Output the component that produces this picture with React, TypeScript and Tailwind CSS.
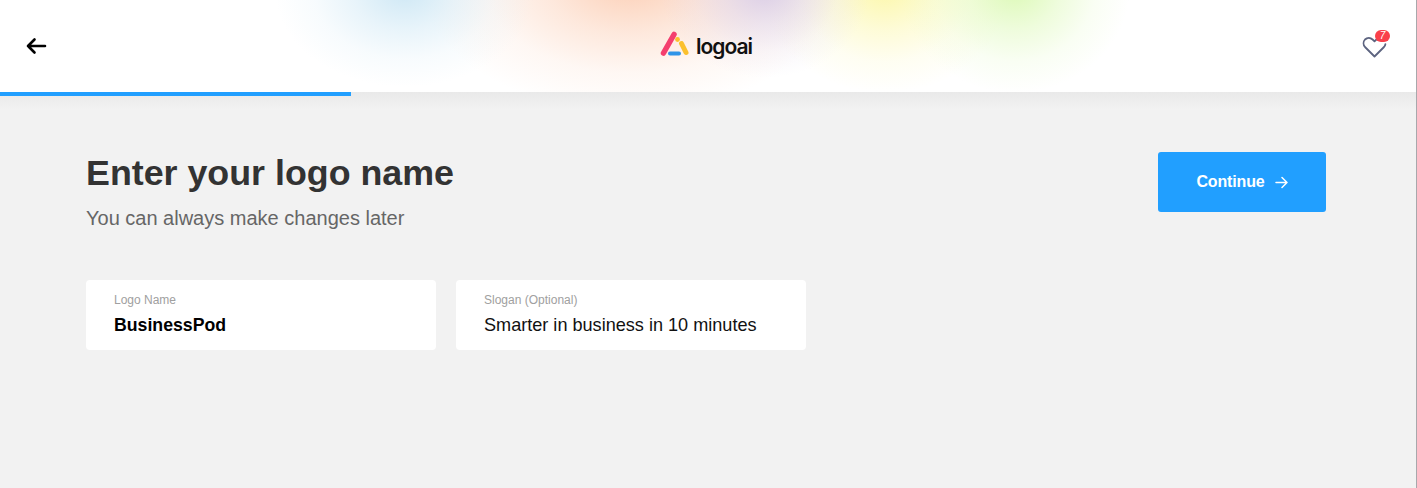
import React from "react";

function Field({ label, value, bold }: { label: string; value: string; bold?: boolean }) {
  return (
    <div className="w-[350px] h-[70px] bg-white rounded-[4px] pl-7 pt-[13px]">
      <div className="text-[12px] leading-[14px] text-[#a0a0a0]">{label}</div>
      <div className={`mt-[6px] leading-[24px] ${bold ? "text-[17.7px] font-bold text-black" : "text-[18.1px] text-[#111]"}`}>{value}</div>
    </div>
  );
}

export default function App() {
  return (
    <div className="w-[1417px] h-[488px] overflow-hidden bg-[#f2f2f2] border-r border-[#a8a8ac] antialiased font-['Liberation_Sans',Arial,sans-serif]">
      {/* Header */}
      <header className="relative h-[92px] bg-white flex items-center justify-between pl-[25px] pr-[26px]">
        <div className="absolute inset-0 bg-[radial-gradient(ellipse_130px_95px_at_405px_-8px,#cfe8f5,#cfe8f578_40%,#cfe8f528_70%,#cfe8f500),radial-gradient(ellipse_105px_90px_at_765px_-12px,#dacde6,#dacde678_40%,#dacde628_70%,#dacde600),radial-gradient(ellipse_210px_130px_at_630px_-18px,#fccfb6,#fccfb678_40%,#fccfb628_70%,#fccfb600),radial-gradient(ellipse_115px_105px_at_1015px_-12px,#dcf9b6,#dcf9b678_40%,#dcf9b628_70%,#dcf9b600),radial-gradient(ellipse_125px_105px_at_885px_-12px,#fcf7aa,#fcf7aa78_40%,#fcf7aa28_70%,#fcf7aa00)]" />

        <svg className="relative" width="22" height="18" viewBox="0 0 22 18" fill="none" stroke="#000" strokeWidth="2.6" strokeLinecap="round" strokeLinejoin="round">
          <path d="M20 9H3M9.500 2.500 3 9l6.500 6.500" />
        </svg>

        <div className="relative ml-[3px] flex items-center gap-[6px]">
          <svg width="30" height="30" viewBox="0 0 30 30" fill="none" strokeLinecap="round">
            <path d="M3.500 22 14 3.500" stroke="#f43f6e" strokeWidth="5.500" />
            <path d="M10 22.500H19" stroke="#2f94e8" strokeWidth="4" />
            <circle cx="17.500" cy="8.500" r="2.400" fill="#fbc02d" />
            <path d="M21.500 12.500 26 21.500" stroke="#fbc02d" strokeWidth="5" />
          </svg>
          <span className="mt-[1px] font-['Inter',sans-serif] text-[21px] leading-[26px] font-semibold text-[#111] tracking-[-1px]">logoai</span>
        </div>

        <div className="relative w-[28px] h-[26px]">
          <svg className="absolute left-0 top-[3px]" width="25" height="22" viewBox="0 0 25 22" fill="none" stroke="#5d6480" strokeWidth="1.800" strokeLinecap="round" strokeLinejoin="round">
            <path d="M12.500 20.500 3 11a5.600 5.600 0 0 1 0-7.500 5.500 5.500 0 0 1 7.600 0l1.900 1.800 1.900-1.800M12.500 20.500 22 11c.8-.9 1.300-1.800 1.400-2.900" />
          </svg>
          <span className="absolute left-[13px] top-[-3px] w-[15px] h-[12px] rounded-full bg-[#f9404a] text-white text-[10px] leading-[12px] text-center italic">7</span>
        </div>
      </header>

      {/* Progress */}
      <div className="h-[18px] bg-gradient-to-b from-[#e9e9e9] to-[#f2f2f2]">
        <div className="w-[351px] h-[4px] bg-[#219fff]" />
      </div>

      {/* Content */}
      <main className="pl-[86px] pr-[90px] pt-[42px]">
        <div className="flex items-start justify-between">
          <div>
            <h1 className="text-[35.800px] leading-[42px] font-bold text-[#333]">Enter your logo name</h1>
            <p className="mt-3 text-[20px] leading-[24px] text-[#666]">You can always make changes later</p>
          </div>
          <button className="w-[168px] h-[60px] bg-[#219fff] rounded-[3px] text-white text-[16px] tracking-[-0.15px] font-bold flex items-center justify-center gap-[10px]">
            Continue
            <svg width="13" height="13" viewBox="0 0 13 13" fill="none" stroke="#fff" strokeWidth="1.500" strokeLinecap="round" strokeLinejoin="round">
              <path d="M1 6.500h11M7 1.500l5 5-5 5" />
            </svg>
          </button>
        </div>
        <div className="mt-[50px] flex gap-5">
          <Field label="Logo Name" value="BusinessPod" bold />
          <Field label="Slogan (Optional)" value="Smarter in business in 10 minutes" />
        </div>
      </main>
    </div>
  );
}
